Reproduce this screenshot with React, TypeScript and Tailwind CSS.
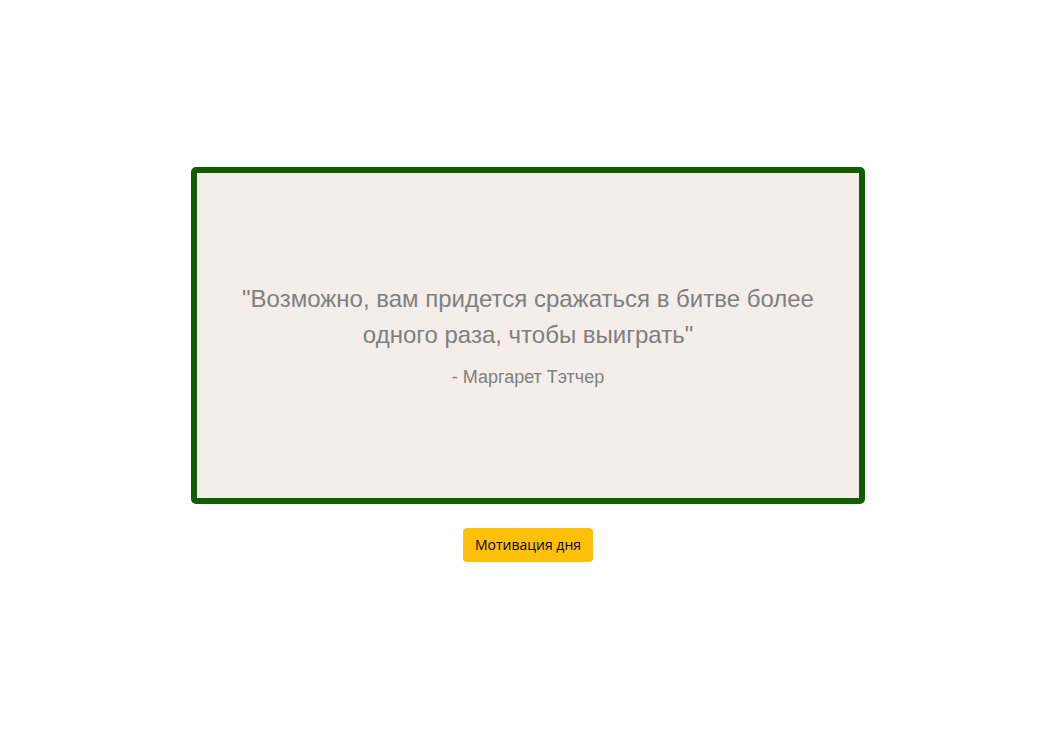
export default function App() {
  return (
    <div className="flex h-[730px] w-full flex-col items-center justify-center gap-6 bg-white pb-[2px] pl-[2px]">
      <div className="flex h-[337px] w-[674px] flex-col items-center justify-center rounded-[5px] border-[6px] border-[#115e00] bg-[#f4ede9] px-10 text-center text-[#808080] [font-family:'Liberation_Sans',Arial,sans-serif]">
        <p className="text-[24px] leading-[36px]">
          "Возможно, вам придется сражаться в битве более одного раза, чтобы выиграть"
        </p>
        <p className="mt-3 text-[18px] leading-6">- Маргарет Тэтчер</p>
      </div>
      <button className="h-[34px] rounded-[4px] bg-[#ffc107] px-3 text-[14px] text-black [font-family:'Open_Sans',sans-serif]">
        Мотивация дня
      </button>
    </div>
  );
}
